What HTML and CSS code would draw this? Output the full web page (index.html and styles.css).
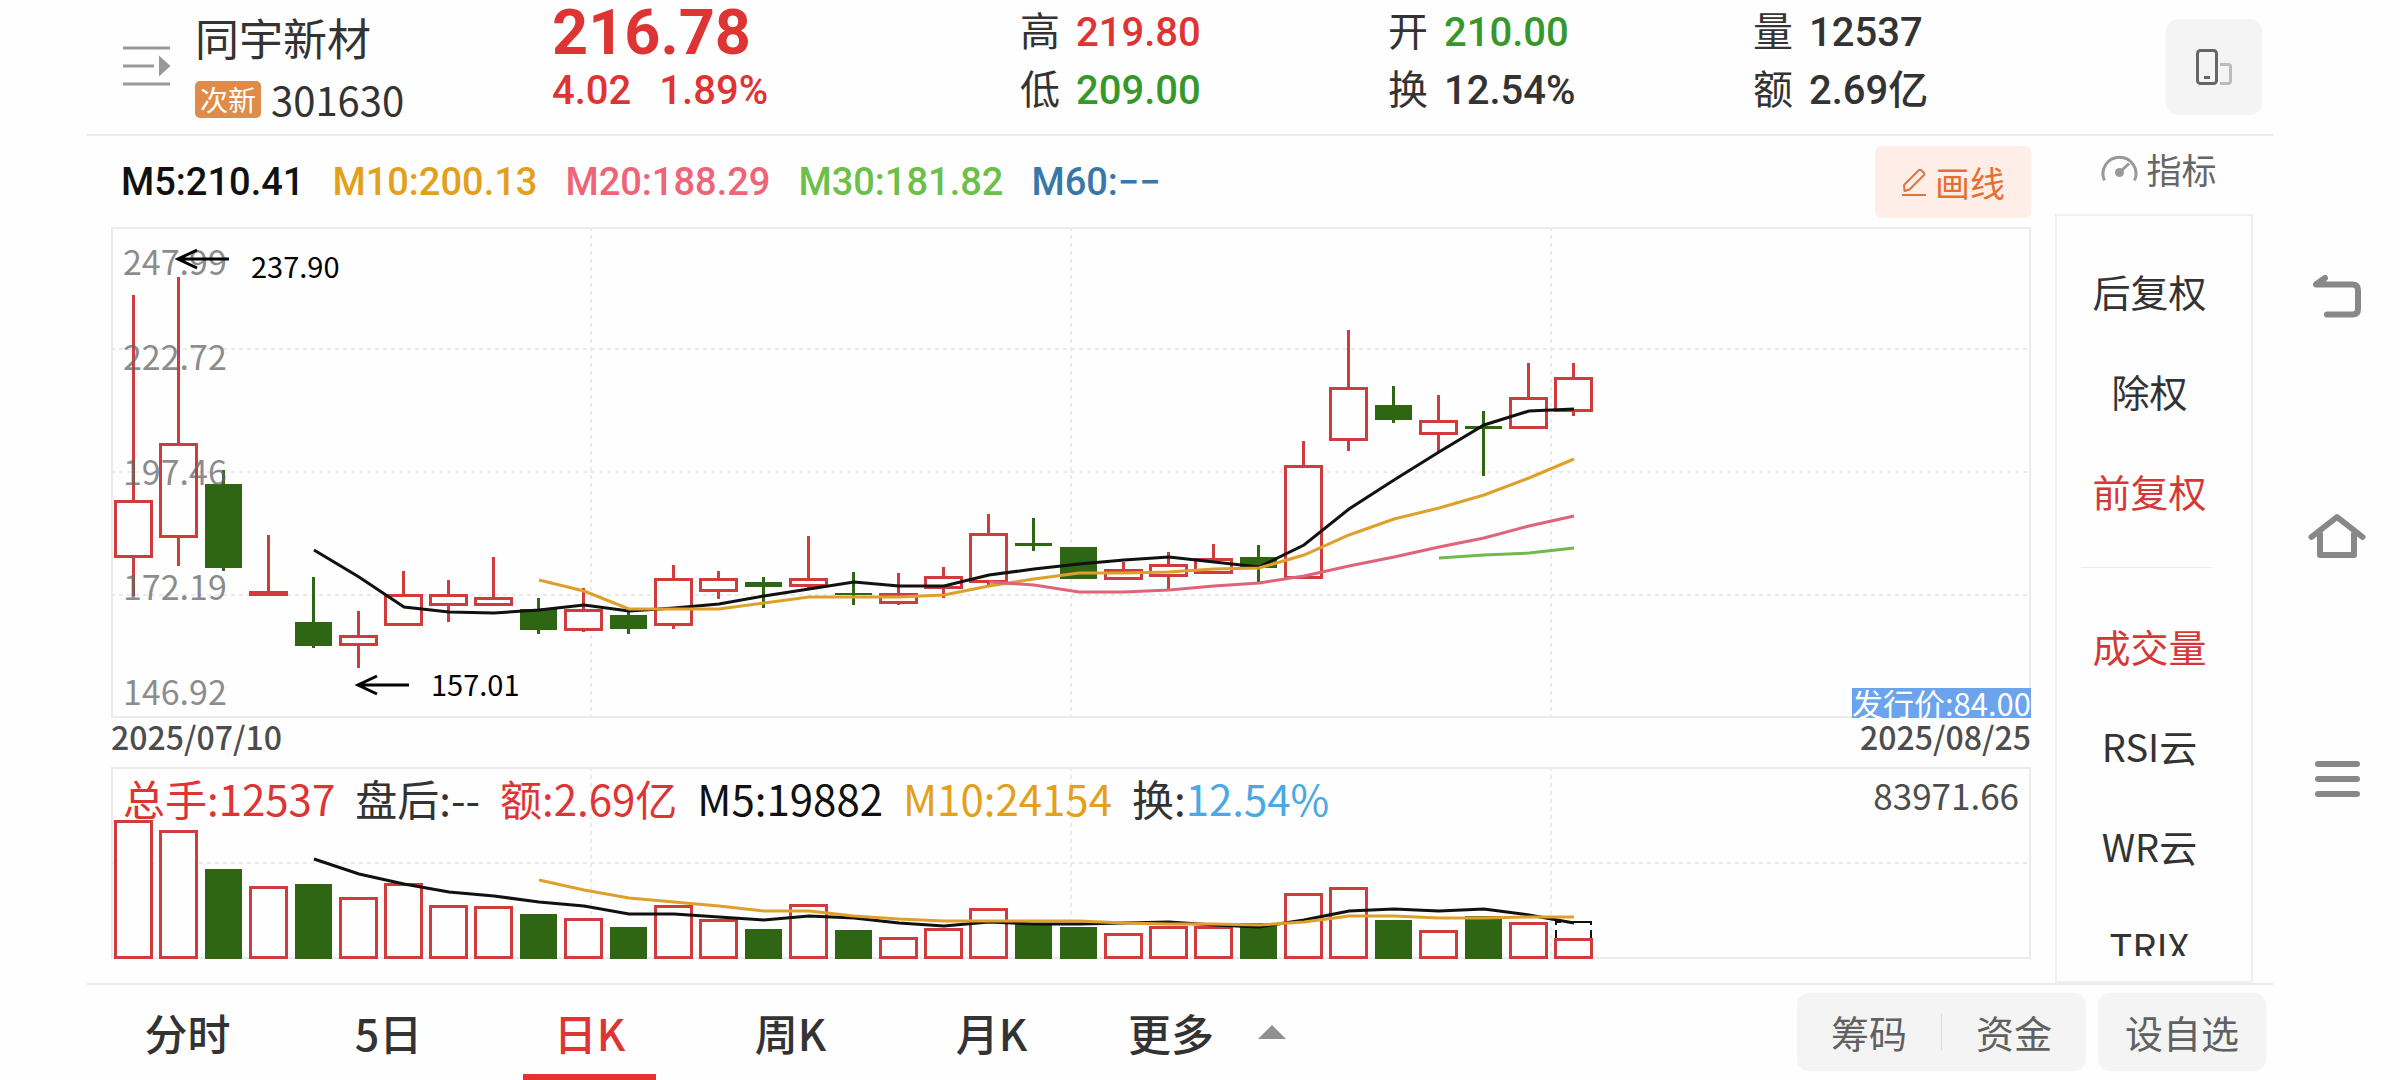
FILE: index.html
```html
<!DOCTYPE html>
<html lang="zh-CN">
<head>
  <meta charset="UTF-8">
  <meta name="viewport" content="width=device-width, initial-scale=1.0">
  <title>同宇新材 301630</title>
  <link rel="stylesheet" href="styles.css">
</head>
<body>
  <div class="app">
    <!-- Quote header -->
    <header class="quote">
      <div class="stock">
        <button class="icon-btn" aria-label="列表">
          <svg width="48" height="40" viewBox="0 0 48 40">
            <path d="M0 2H47M0 20H31M0 38H47" stroke="#999" stroke-width="3" fill="none"/>
            <path d="M36 9.500L47.500 20L36 30.500Z" fill="#999"/>
          </svg>
        </button>
        <div>
          <h1>同宇新材</h1>
          <div class="code"><span class="badge">次新</span>301630</div>
        </div>
      </div>
      <div class="price up">
        <div class="last">216.78</div>
        <div class="change"><span>4.02</span><span>1.89%</span></div>
      </div>
      <dl class="stats">
        <div><dt>高</dt><dd class="up">219.80</dd></div>
        <div><dt>低</dt><dd class="down">209.00</dd></div>
      </dl>
      <dl class="stats">
        <div><dt>开</dt><dd class="down">210.00</dd></div>
        <div><dt>换</dt><dd>12.54%</dd></div>
      </dl>
      <dl class="stats">
        <div><dt>量</dt><dd>12537</dd></div>
        <div><dt>额</dt><dd>2.69亿</dd></div>
      </dl>
      <button class="rotate" aria-label="竖屏">
        <svg width="38" height="40" viewBox="0 0 38 40">
          <rect x="2.500" y="3.500" width="19" height="33" rx="3" fill="none" stroke="#666" stroke-width="3"/>
          <path d="M9 30.500H15" stroke="#666" stroke-width="3"/>
          <path d="M25 17.500H33Q35.500 17.500 35.500 20V34Q35.500 36.500 33 36.500H25" fill="none" stroke="#bbb" stroke-width="3"/>
        </svg>
      </button>
    </header>

    <main class="main">
      <section class="charts">
        <div class="ma-row">
          <span class="ma5">M5:210.41</span>
          <span class="ma10">M10:200.13</span>
          <span class="ma20">M20:188.29</span>
          <span class="ma30">M30:181.82</span>
          <span class="ma60">M60:−−</span>
          <button class="draw">
            <svg width="26" height="30" viewBox="0 0 26 30">
              <path d="M3.500 24L3 18L17.500 3.500Q19 2 20.500 3.500L22.500 5.500Q24 7 22.500 8.500L8.500 22.500Z" fill="none" stroke="#dd7540" stroke-width="2" stroke-linejoin="round"/>
              <path d="M1 28H25" stroke="#dd7540" stroke-width="2"/>
            </svg>
            画线
          </button>
        </div>

        <div class="panel">
          <svg id="kline" viewBox="0 0 1920 491"></svg>
          <span class="issue">发行价:84.00</span>
        </div>
        <div class="dates"><span>2025/07/10</span><span>2025/08/25</span></div>

        <div class="panel">
          <svg id="volume" viewBox="0 0 1920 192"></svg>
          <div class="vol-info">
            <span class="up">总手:12537</span>
            <span>盘后:--</span>
            <span class="up">额:2.69亿</span>
            <span class="ma5">M5:19882</span>
            <span class="ma10">M10:24154</span>
            <span>换:<span class="turnover">12.54%</span></span>
            <span class="vol-max">83971.66</span>
          </div>
        </div>
      </section>

      <aside class="side">
        <button class="side-title">
          <svg width="37" height="32" viewBox="0 0 37 32">
            <path d="M3.500 28.500A16.500 16.500 0 1 1 33.500 28.500" fill="none" stroke="#999" stroke-width="3"/>
            <circle cx="18.500" cy="20.500" r="4.500" fill="#999"/>
            <path d="M18.500 20.500L28 11.500" stroke="#999" stroke-width="3"/>
          </svg>
          指标
        </button>
        <div class="side-box">
          <div class="side-list">
            <button>后复权</button>
            <button>除权</button>
            <button class="active">前复权</button>
            <hr>
            <button class="active">成交量</button>
            <button>RSI云</button>
            <button>WR云</button>
            <button>TRIX</button>
          </div>
        </div>
      </aside>
    </main>

    <footer class="footer">
      <nav class="tabs">
        <button>分时</button>
        <button>5日</button>
        <button class="active">日K</button>
        <button>周K</button>
        <button>月K</button>
        <button class="more">更多<i></i></button>
      </nav>
      <div class="actions">
        <div class="group">
          <button>筹码</button>
          <button>资金</button>
        </div>
        <div class="group"><button>设自选</button></div>
      </div>
    </footer>
  </div>

  <!-- System navigation -->
  <nav class="sysnav">
    <button aria-label="返回">
      <svg width="60" height="60" viewBox="0 0 60 60">
        <path d="M18 11L9 17.500H45.500Q51 17.500 51 23V42Q51 47.500 45.500 47.500H20" fill="none" stroke="#888" stroke-width="6" stroke-linecap="round" stroke-linejoin="round"/>
      </svg>
    </button>
    <button aria-label="主页">
      <svg width="60" height="60" viewBox="0 0 60 60">
        <path d="M4.500 29L30 9L55.500 29M13 26V47H47V26" fill="none" stroke="#888" stroke-width="6" stroke-linecap="round" stroke-linejoin="round"/>
      </svg>
    </button>
    <button aria-label="菜单">
      <svg width="60" height="60" viewBox="0 0 60 60">
        <path d="M11 15H50M11 30H50M11 45H50" stroke="#888" stroke-width="6" stroke-linecap="round"/>
      </svg>
    </button>
  </nav>

  <script src="chart.js"></script>
</body>
</html>
```
FILE: styles.css
```css
/* General Reset */
* {
  margin: 0;
  padding: 0;
  box-sizing: border-box;
}

body {
  display: flex;
  min-height: 100vh;
  background: #fefefe;
  color: #333;
  font-family: "Noto Sans CJK SC", sans-serif;
}

button {
  border: 0;
  background: none;
  color: inherit;
  font: inherit;
  cursor: pointer;
}

svg {
  display: block;
}

.app {
  flex: 1;
  display: flex;
  flex-direction: column;
  margin-left: 87px;
}

.up {
  color: #de3434;
}

.down {
  color: #36982a;
}

/* Quote header */
.quote {
  display: grid;
  grid-template-columns: 429fr 468fr 368fr 365fr 413fr 96px;
  height: 136px;
  padding: 0 11px 0 36px;
  border-bottom: 2px solid #ececec;
}

.stock {
  display: flex;
  gap: 24px;
}

.icon-btn {
  align-self: flex-start;
  margin-top: 46px;
}

.stock h1 {
  margin-top: 7px;
  font-size: 44px;
  font-weight: 400;
  line-height: 60px;
}

.code {
  display: flex;
  align-items: center;
  gap: 10px;
  font-size: 40px;
  line-height: 64px;
}

.badge {
  padding: 0 5px;
  border-radius: 5px;
  background: #e08c48;
  color: #fff;
  font-size: 28px;
  line-height: 37px;
}

.price,
.stats dd,
.ma-row {
  font-family: Roboto, "Noto Sans CJK SC", sans-serif;
  font-weight: 500;
}

.last {
  font-size: 63px;
  font-weight: 700;
  line-height: 66px;
}

.change {
  display: flex;
  gap: 28px;
  font-size: 40px;
  line-height: 50px;
}

.stats div {
  display: flex;
  align-items: baseline;
  gap: 16px;
  height: 58px;
  font-size: 40px;
  line-height: 58px;
}

.rotate {
  display: flex;
  align-items: center;
  justify-content: center;
  height: 96px;
  margin-top: 19px;
  border-radius: 12px;
  background: #f4f4f4;
}

/* Charts */
.main {
  flex: 1;
  display: grid;
  grid-template-columns: 1fr 198px;
  gap: 24px;
  padding: 0 20px 0 24px;
}

.ma-row {
  display: flex;
  align-items: center;
  gap: 28px;
  height: 91px;
  padding-left: 10px;
  font-size: 38px;
}

.ma5 {
  color: #111;
}

.ma10 {
  color: #e3a01b;
}

.ma20 {
  color: #ee6478;
}

.ma30 {
  color: #6cc04a;
}

.ma60 {
  color: #3778a8;
}

.draw {
  display: flex;
  align-items: center;
  justify-content: center;
  gap: 8px;
  width: 156px;
  height: 72px;
  margin-left: auto;
  border-radius: 6px;
  background: #ffeee8;
  color: #e66f30;
  font-size: 35px;
  font-weight: 400;
}

.panel {
  position: relative;
}

.panel svg {
  width: 100%;
  height: auto;
}

.panel text {
  font-size: 34px;
  fill: #666;
  fill-opacity: 0.75;
}

.panel .mark {
  font-size: 29px;
  fill: #000;
  fill-opacity: 1;
}

.issue {
  position: absolute;
  right: 0;
  bottom: 0;
  background: #6ba3ec;
  color: #fff;
  font-size: 31px;
  line-height: 30px;
}

.dates {
  display: flex;
  justify-content: space-between;
  height: 49px;
  color: #4d4d4d;
  font-size: 32px;
  font-weight: 500;
  line-height: 36px;
}

.vol-info {
  position: absolute;
  top: 0;
  left: 0;
  right: 0;
  display: flex;
  gap: 20px;
  padding: 0 12px;
  font-size: 42px;
  line-height: 62px;
}

.turnover {
  color: #4aa8e4;
}

.vol-max {
  margin-left: auto;
  color: #4d4d4d;
  font-size: 35px;
  line-height: 56px;
}

/* Indicator list */
.side {
  display: flex;
  flex-direction: column;
}

.side-title {
  display: flex;
  align-items: center;
  justify-content: center;
  gap: 8px;
  height: 78px;
  padding: 0 0 14px 10px;
  color: #666;
  font-size: 35px;
}

.side-box {
  flex: 1 1 0px;
  min-height: 0;
  padding-bottom: 25px;
  border: 2px solid #f0f0f0;
}

.side-list {
  height: 100%;
  padding: 24px 9px 0 0;
  overflow: hidden;
}

.side-list button {
  display: block;
  width: 100%;
  height: 100px;
  font-size: 38px;
}

.side-list .active {
  color: #d63838;
}

.side-list hr {
  margin: 27px 30px 27px 24px;
  border: 0;
  border-top: 1px solid #ececec;
}

/* Bottom bar */
.footer {
  display: flex;
  justify-content: space-between;
  height: 97px;
  padding-right: 7px;
  border-top: 2px solid #ececec;
}

.tabs {
  display: flex;
}

.tabs button {
  position: relative;
  width: 201px;
  padding-bottom: 2px;
  font-size: 43px;
  font-weight: 500;
}

.tabs .active {
  color: #de3434;
}

.tabs .active::after {
  content: '';
  position: absolute;
  left: 34px;
  right: 34px;
  bottom: 0;
  height: 6px;
  background: #e93030;
}

.tabs .more {
  display: flex;
  align-items: center;
  justify-content: flex-end;
  gap: 44px;
  padding-right: 7px;
}

.more i {
  border: 14px solid transparent;
  border-top: 0;
  border-bottom-color: #909090;
}

.actions {
  display: flex;
  gap: 12px;
  padding-top: 8px;
}

.group {
  display: flex;
  align-items: center;
  height: 78px;
  border-radius: 12px;
  background: #f4f4f4;
  color: #606060;
}

.group button {
  padding: 0 27px;
  font-size: 38px;
  line-height: 36px;
}

.group button:not(:only-child) {
  padding: 0 34px;
}

.group button + button {
  border-left: 1px solid #ddd;
}

/* System navigation */
.sysnav {
  display: flex;
  flex-direction: column;
  align-items: center;
  gap: 181px;
  width: 127px;
  padding-top: 267px;
}
```
FILE: chart.js
```js
const STEP = 45;
const FIRST = 22;
const RED = '#d03c3c';
const GREEN = '#2f6613';

const x = i => FIRST + STEP * i;

// [high, body top, body bottom, low, rising]
const candles = [
  [68, 273, 331, 369, 1], [50, 216, 311, 339, 1], [243, 257, 341, 344, 0],
  [308, 364, 369, 369, 1], [350, 395, 419, 421, 0], [384, 408, 419, 441, 1],
  [344, 367, 399, 399, 1], [353, 367, 379, 395, 1], [330, 370, 379, 379, 1],
  [371, 382, 403, 407, 0], [361, 382, 404, 405, 1], [385, 388, 402, 407, 0],
  [338, 351, 399, 402, 1], [344, 351, 365, 372, 1], [350, 355, 360, 381, 0],
  [309, 351, 360, 361, 1], [345, 366, 368, 378, 0], [346, 366, 377, 378, 1],
  [340, 349, 362, 371, 1], [287, 306, 356, 358, 1], [291, 316, 319, 324, 0],
  [320, 320, 352, 352, 0], [335, 342, 353, 353, 1], [325, 337, 350, 362, 1],
  [317, 331, 347, 347, 1], [318, 330, 341, 355, 0], [214, 238, 352, 352, 1],
  [103, 160, 214, 224, 1], [159, 178, 193, 196, 0], [168, 193, 208, 225, 1],
  [184, 199, 202, 249, 0], [136, 170, 202, 202, 1], [136, 150, 185, 189, 1]
];

const volumes = [
  53, 63, 102, 119, 117, 130, 116, 138, 139, 147, 151, 160, 138, 152, 162, 137, 163,
  170, 161, 141, 156, 160, 166, 159, 159, 156, 126, 120, 153, 163, 149, 155, 171
];

// Averages, each with the index of its first day
const priceLines = [
  { from: 4, color: '#111', y: [323, 350, 380, 385, 386, 383, 378, 384, 381, 377, 369, 362, 355, 359, 359, 348, 342, 337, 333, 330, 335, 340, 318, 282, 253, 225, 198, 184, 182] },
  { from: 9, color: '#dea02a', y: [353, 364, 382, 382, 382, 376, 370, 370, 370, 368, 359, 352, 346, 346, 345, 342, 341, 328, 308, 292, 281, 268, 251, 232] },
  { from: 19, color: '#e0637a', y: [355, 358, 365, 365, 363, 359, 356, 349, 339, 330, 320, 311, 299, 289] },
  { from: 29, color: '#70b84f', y: [331, 328, 326, 321] }
];

const volumeLines = [
  { from: 4, color: '#111', y: [92, 107, 117, 125, 129, 135, 139, 147, 147, 150, 153, 149, 151, 156, 159, 155, 157, 157, 156, 155, 158, 160, 153, 144, 142, 144, 142, 148, 156] },
  { from: 9, color: '#dea02a', y: [113, 123, 131, 135, 139, 144, 144, 149, 152, 154, 154, 154, 154, 156, 157, 157, 158, 155, 149, 149, 151, 151, 150, 150] }
];

function line(x1, y1, x2, y2, color, width, dash) {
  return `<line x1="${x1}" y1="${y1}" x2="${x2}" y2="${y2}" stroke="${color}" stroke-width="${width}"${dash ? ` stroke-dasharray="${dash}"` : ''}/>`;
}

function bar(i, top, bottom, rising) {
  if (!rising) {
    return `<rect x="${x(i) - 18}" y="${top}" width="37" height="${bottom - top}" fill="${GREEN}"/>`;
  }
  return `<rect x="${x(i) - 17.5}" y="${top + 1.5}" width="36" height="${bottom - top - 3}" fill="#fefefe" stroke="${RED}" stroke-width="3"/>`;
}

function average(set) {
  const points = set.y.map((y, n) => `${x(set.from + n) + 1},${y}`).join(' ');
  return `<polyline points="${points}" fill="none" stroke="${set.color}" stroke-width="3"/>`;
}

function frame(height, rows) {
  let out = `<rect x="1" y="1" width="1918" height="${height - 2}" fill="none" stroke="#ebebeb" stroke-width="2"/>`;
  rows.forEach(y => out += line(0, y, 1920, y, '#e4e4e4', 1.5, '4 4'));
  [480, 960, 1440].forEach(cx => out += line(cx, 0, cx, height, '#ebebeb', 2, '4 4'));
  return out;
}

function arrow(ax, ay, label, ty) {
  return `<path d="M${ax + 51} ${ay}H${ax}M${ax + 19} ${ay - 9}L${ax} ${ay}L${ax + 19} ${ay + 9}" fill="none" stroke="#000" stroke-width="3"/>
    <text class="mark" x="${ax + 73}" y="${ty}">${label}</text>`;
}

// Candlestick chart
let k = frame(491, [122, 245, 368]);
candles.forEach(([high, top, bottom, low, rising], i) => {
  k += line(x(i) + 0.5, high, x(i) + 0.5, low, rising ? RED : GREEN, 3);
  k += bar(i, top, bottom, rising);
});
priceLines.forEach(set => k += average(set));
[['247.99', 48], ['222.72', 143], ['197.46', 258], ['172.19', 373], ['146.92', 478]]
  .forEach(([label, y]) => k += `<text x="12" y="${y}">${label}</text>`);
k += arrow(67, 32, '237.90', 51) + arrow(247, 458, '157.01', 469);
document.getElementById('kline').innerHTML = k;

// Volume chart, with the full-day estimate outlined over the last bar
let v = frame(192, [96]);
volumes.forEach((top, i) => v += bar(i, top, 192, candles[i][4]));
v += `<path d="M1445 171V163M1445 158V155H1450M1456 155H1480V158M1480 163V171" fill="none" stroke="#111" stroke-width="2"/>`;
volumeLines.forEach(set => v += average(set));
document.getElementById('volume').innerHTML = v;
```
